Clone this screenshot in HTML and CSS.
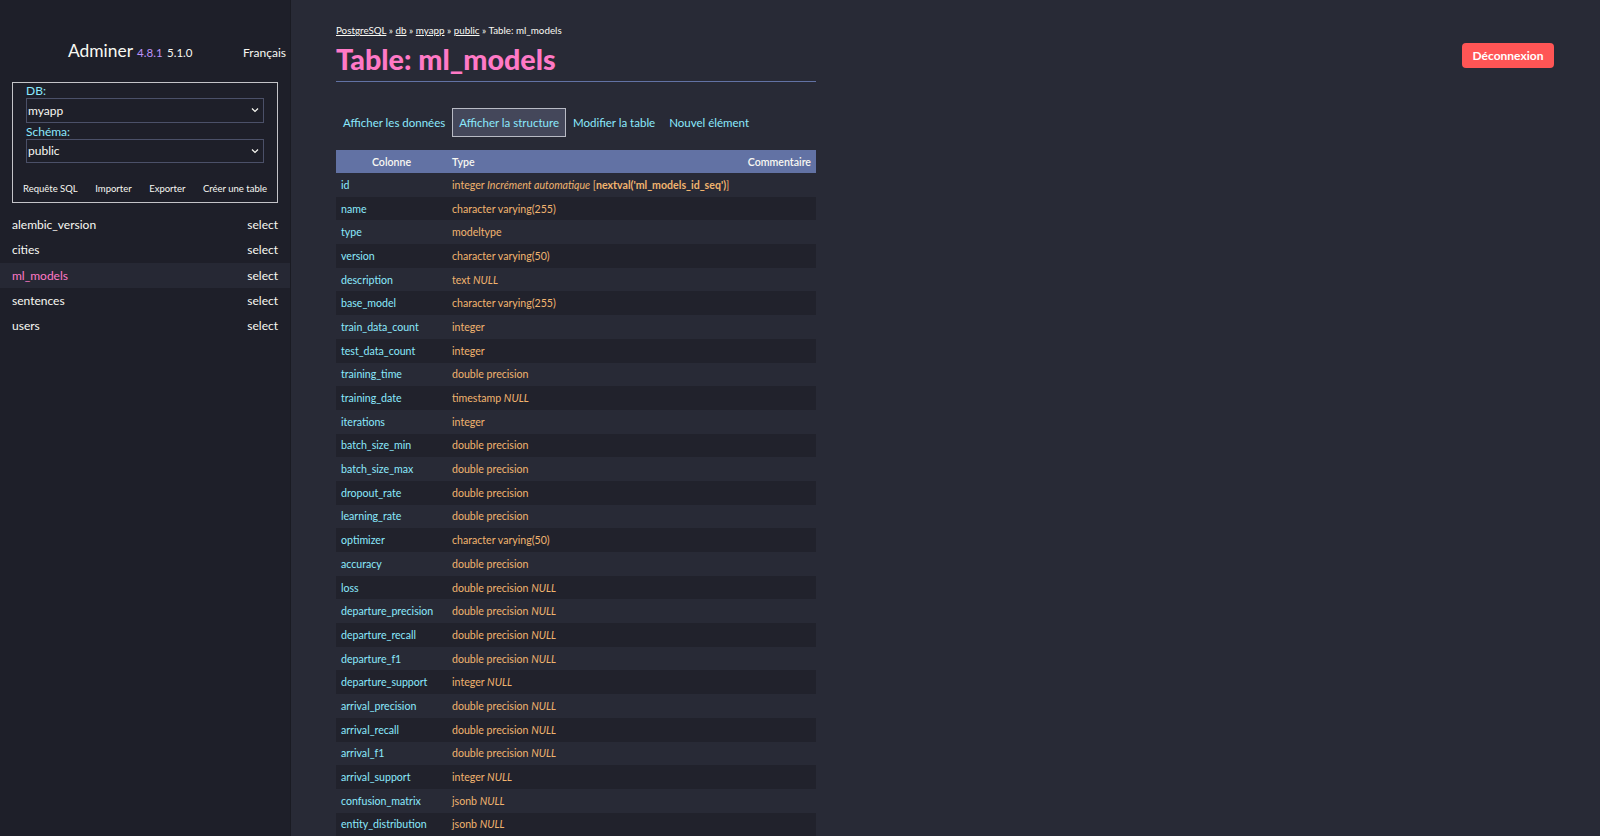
FILE: index.html
```html
<!DOCTYPE html>
<html lang="fr">
<head>
<meta charset="utf-8">
<title>Table: ml_models - Adminer</title>
<link rel="stylesheet" href="styles.css">
</head>
<body>
<div class="layout">
  <aside class="sidebar">
    <div class="side-head">
      <h1 class="brand"><span class="brand-name">Adminer</span> <span class="ver">4.8.1</span> <span class="ver2">5.1.0</span></h1>
      <span class="lang">Français</span>
    </div>
    <div class="dbbox">
      <label class="lbl">DB:</label>
      <div class="sel"><span>myapp</span><svg class="chev" width="8" height="6" viewBox="0 0 8 6"><path d="M1 1.5 L4 4.5 L7 1.5" fill="none" stroke="#f8f8f2" stroke-width="1.2"/></svg></div>
      <label class="lbl">Schéma:</label>
      <div class="sel"><span>public</span><svg class="chev" width="8" height="6" viewBox="0 0 8 6"><path d="M1 1.5 L4 4.5 L7 1.5" fill="none" stroke="#f8f8f2" stroke-width="1.2"/></svg></div>
      <div class="dblinks">
        <a>Requête SQL</a><a>Importer</a><a>Exporter</a><a>Créer une table</a>
      </div>
    </div>
    <ul class="tables">
      <li><a class="tname">alembic_version</a><a class="tsel">select</a></li>
      <li><a class="tname">cities</a><a class="tsel">select</a></li>
      <li class="active"><a class="tname">ml_models</a><a class="tsel">select</a></li>
      <li><a class="tname">sentences</a><a class="tsel">select</a></li>
      <li><a class="tname">users</a><a class="tsel">select</a></li>
    </ul>
  </aside>
  <main class="main">
    <div class="content">
      <p class="crumbs"><a>PostgreSQL</a> » <a>db</a> » <a>myapp</a> » <a>public</a> » Table: ml_models</p>
      <h2 class="title">Table: ml_models</h2>
      <nav class="tabs">
        <a class="tab">Afficher les données</a><a class="tab active">Afficher la structure</a><a class="tab">Modifier la table</a><a class="tab">Nouvel élément</a>
      </nav>
      <table class="struct">
        <colgroup><col class="c1"><col class="c2"><col class="c3"></colgroup>
        <thead><tr><th class="h1">Colonne</th><th class="h2">Type</th><th class="h3">Commentaire</th></tr></thead>
        <tbody>
          <tr><th>id</th><td>integer <i>Incrément automatique</i> [<b>nextval('ml_models_id_seq')</b>]</td><td></td></tr>
          <tr><th>name</th><td>character varying(255)</td><td></td></tr>
          <tr><th>type</th><td>modeltype</td><td></td></tr>
          <tr><th>version</th><td>character varying(50)</td><td></td></tr>
          <tr><th>description</th><td>text <i>NULL</i></td><td></td></tr>
          <tr><th>base_model</th><td>character varying(255)</td><td></td></tr>
          <tr><th>train_data_count</th><td>integer</td><td></td></tr>
          <tr><th>test_data_count</th><td>integer</td><td></td></tr>
          <tr><th>training_time</th><td>double precision</td><td></td></tr>
          <tr><th>training_date</th><td>timestamp <i>NULL</i></td><td></td></tr>
          <tr><th>iterations</th><td>integer</td><td></td></tr>
          <tr><th>batch_size_min</th><td>double precision</td><td></td></tr>
          <tr><th>batch_size_max</th><td>double precision</td><td></td></tr>
          <tr><th>dropout_rate</th><td>double precision</td><td></td></tr>
          <tr><th>learning_rate</th><td>double precision</td><td></td></tr>
          <tr><th>optimizer</th><td>character varying(50)</td><td></td></tr>
          <tr><th>accuracy</th><td>double precision</td><td></td></tr>
          <tr><th>loss</th><td>double precision <i>NULL</i></td><td></td></tr>
          <tr><th>departure_precision</th><td>double precision <i>NULL</i></td><td></td></tr>
          <tr><th>departure_recall</th><td>double precision <i>NULL</i></td><td></td></tr>
          <tr><th>departure_f1</th><td>double precision <i>NULL</i></td><td></td></tr>
          <tr><th>departure_support</th><td>integer <i>NULL</i></td><td></td></tr>
          <tr><th>arrival_precision</th><td>double precision <i>NULL</i></td><td></td></tr>
          <tr><th>arrival_recall</th><td>double precision <i>NULL</i></td><td></td></tr>
          <tr><th>arrival_f1</th><td>double precision <i>NULL</i></td><td></td></tr>
          <tr><th>arrival_support</th><td>integer <i>NULL</i></td><td></td></tr>
          <tr><th>confusion_matrix</th><td>jsonb <i>NULL</i></td><td></td></tr>
          <tr><th>entity_distribution</th><td>jsonb <i>NULL</i></td><td></td></tr>
        </tbody>
      </table>
    </div>
    <button class="logout">Déconnexion</button>
  </main>
</div>
</body>
</html>
```
FILE: styles.css
```css
* { box-sizing: border-box; }
html, body { margin: 0; padding: 0; }
body {
  background: #282a36;
  color: #f8f8f2;
  font-family: Lato, "Noto Sans", sans-serif;
  font-size: 12px;
  height: 836px;
  overflow: hidden;
}
a { color: inherit; text-decoration: none; }
.layout { display: flex; min-height: 836px; }

/* sidebar */
.sidebar {
  width: 291px;
  flex: none;
  background: #1e1f29;
  border-right: 1px solid #1a1b23;
  min-height: 836px;
}
.side-head {
  display: flex;
  justify-content: space-between;
  align-items: baseline;
  padding: 39px 4px 0 68px;
  height: 82px;
}
.brand { margin: 0; font-weight: 400; font-size: 17.4px; line-height: 24px; }
.ver { color: #bd93f9; font-size: 11.5px; }
.ver2 { font-size: 11.5px; }
.lang { font-size: 12px; }
.dbbox {
  margin: 0 12px;
  border: 1px solid #c4c4c8;
  padding: 0 13px 8px 13px;
  height: 121px;
}
.lbl { display: block; color: #8be9fd; font-size: 12px; line-height: 15px; }
.sel {
  display: flex;
  justify-content: space-between;
  align-items: center;
  height: 24.5px;
  border: 1px solid #4b5068;
  background: #1e1f29;
  padding: 0 4px 0 1px;
  font-size: 12px;
  margin-bottom: 1px;
}
.chev { display: block; }
.dblinks {
  display: flex;
  justify-content: space-between;
  margin: 20px -3px 0 -3px;
  font-size: 9.5px;
}
.tables { list-style: none; margin: 9px 0 0; padding: 0; }
.tables li {
  display: flex;
  justify-content: space-between;
  align-items: center;
  height: 25.3px;
  padding: 0 12px;
  font-size: 12px;
}
.tables li.active { background: #262834; }
.tables li.active .tname { color: #ff79c6; }

/* main */
.main {
  flex: 1;
  display: flex;
  justify-content: space-between;
  align-items: flex-start;
  padding: 0 46px 0 45px;
}
.content { width: 480px; }
.crumbs { margin: 0; padding-top: 23px; font-size: 9.8px; line-height: 14px; }
.crumbs a { text-decoration: underline; }
.title {
  margin: 4px 0 0;
  color: #ff79c6;
  font-size: 28.7px;
  line-height: 36px;
  font-weight: 900;
  padding-bottom: 4px;
  border-bottom: 1px solid #6272a4;
}
.tabs { display: flex; margin-top: 26px; height: 29px; }
.tab {
  display: flex;
  align-items: center;
  padding: 0 6px;
  border: 1px solid transparent;
  color: #8be9fd;
  font-size: 11.5px;
}
.tab.active { background: #44475a; border-color: #b8bac4; }
.struct {
  margin-top: 13px;
  width: 480px;
  border-collapse: collapse;
  table-layout: fixed;
  font-size: 10.6px;
}
.c1 { width: 111px; }
.c3 { width: 80px; }
.struct th, .struct td {
  padding: 0 5px;
  height: 23.7px;
  line-height: 14px;
  white-space: nowrap;
  vertical-align: middle;
}
.struct thead th {
  background: #6272a4;
  color: #f8f8f2;
  font-weight: 600;
  height: 23px;
}
.struct .h1 { text-align: center; }
.struct .h2 { text-align: left; }
.struct .h3 { text-align: right; }
.struct tbody th { text-align: left; font-weight: 400; color: #8be9fd; }
.struct tbody td { color: #f1b46f; }
.struct tbody td b { font-weight: 700; }
.struct tbody tr:nth-child(even) { background: #21222c; }
.logout {
  margin-top: 43px;
  height: 24.5px;
  width: 92px;
  padding: 0;
  background: #ff5555;
  color: #fff;
  border: 0;
  border-radius: 4px;
  font-family: inherit;
  font-weight: 700;
  font-size: 12px;
}
```
